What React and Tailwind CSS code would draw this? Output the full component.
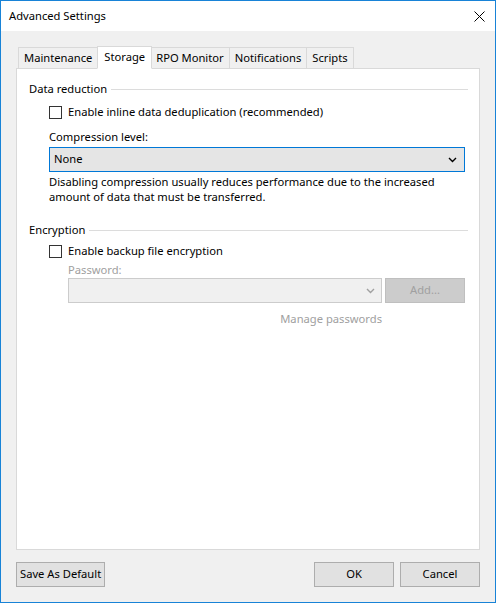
import React, { useState } from 'react';

const tabs = ['Maintenance', 'Storage', 'RPO Monitor', 'Notifications', 'Scripts'];

const Checkbox = ({ label, checked, onChange }) => (
  <label className="flex items-center gap-[6px] h-[15px] cursor-default">
    <span className="w-[13px] h-[13px] border border-[#333333] bg-white flex items-center justify-center">
      {checked && (
        <svg width="9" height="9" viewBox="0 0 9 9">
          <path d="M1 4.5 L3.5 7 L8 1.5" fill="none" stroke="#333" strokeWidth="1.4" />
        </svg>
      )}
    </span>
    <input type="checkbox" className="hidden" checked={checked} onChange={onChange} />
    <span>{label}</span>
  </label>
);

const GroupHeader = ({ title }) => (
  <div className="flex items-center gap-[4px] h-[16px]">
    <span>{title}</span>
    <div className="flex-1 h-px bg-[#dcdcdc]" />
  </div>
);

const Chevron = ({ color }) => (
  <svg width="9" height="6" viewBox="0 0 9 6">
    <path d="M1 1 L4.5 4.5 L8 1" fill="none" stroke={color} strokeWidth="1.4" />
  </svg>
);

const Button = ({ children, className = '' }) => (
  <button className={`h-[25px] bg-[#e1e1e1] border border-[#adadad] text-[#000] ${className}`}>
    {children}
  </button>
);

export default function App() {
  const [active, setActive] = useState('Storage');
  const [dedup, setDedup] = useState(false);
  const [encrypt, setEncrypt] = useState(false);

  return (
    <div
      className="w-[496px] h-[603px] border border-[#1883d7] bg-[#f0f0f0] flex flex-col text-[11.2px] text-black"
      style={{ fontFamily: '"Segoe UI", "Noto Sans", sans-serif' }}
    >
      {/* title bar */}
      <div className="h-[30px] bg-white flex items-center justify-between pl-[8px] pr-[10px] shrink-0">
        <span>Advanced Settings</span>
        <svg width="11" height="11" viewBox="0 0 11 11">
          <path d="M0.5 0.5 L10.5 10.5 M10.5 0.5 L0.5 10.5" stroke="#000" strokeWidth="1" />
        </svg>
      </div>

      <div className="flex-1 flex flex-col px-[15px] pt-[15px] pb-[15px]">
        {/* tab strip */}
        <div className="flex items-end h-[22px] pl-[2px] relative z-10">
          {tabs.map((t) => {
            const on = t === active;
            return (
              <button
                key={t}
                onClick={() => setActive(t)}
                className={
                  on
                    ? 'h-[23px] -mb-px bg-white border border-[#d9d9d9] border-b-white px-[6px] -mx-px relative z-10'
                    : 'h-[21px] bg-[#f0f0f0] border border-[#d9d9d9] border-b-0 px-[5px] -ml-px first:ml-0'
                }
              >
                {t}
              </button>
            );
          })}
        </div>

        {/* tab page */}
        <div className="flex-1 bg-white border border-[#d9d9d9] pl-[12px] pr-[11px] pt-[12px]">
          <GroupHeader title="Data reduction" />
          <div className="pl-[20px] pr-[3px] pt-[8px]">
            <Checkbox
              label="Enable inline data deduplication (recommended)"
              checked={dedup}
              onChange={() => setDedup(!dedup)}
            />
            <div className="mt-[9px] h-[16px] leading-[16px]">Compression level:</div>
            <div className="mt-[2px] h-[25px] border border-[#0078d7] bg-[#e5e5e5] flex items-center justify-between pl-[4px] pr-[7px]">
              <span>None</span>
              <Chevron color="#000" />
            </div>
            <p className="mt-[2px] leading-[15px]">
              Disabling compression usually reduces performance due to the increased amount of data that must be transferred.
            </p>
          </div>

          <div className="mt-[18px]">
            <GroupHeader title="Encryption" />
          </div>
          <div className="pl-[20px] pr-[3px] pt-[6px]">
            <Checkbox
              label="Enable backup file encryption"
              checked={encrypt}
              onChange={() => setEncrypt(!encrypt)}
            />
            <div className="pl-[19px]">
              <div className="mt-[3px] h-[16px] leading-[16px] text-[#a0a0a0]">Password:</div>
              <div className="mt-0 flex gap-[3px]">
                <div className="flex-1 h-[25px] border border-[#cccccc] bg-[#f0f0f0] flex items-center justify-end">
                  <div className="w-[22px] h-full flex items-center justify-center">
                    <Chevron color="#a0a0a0" />
                  </div>
                </div>
                <button className="w-[80px] h-[25px] bg-[#cccccc] border border-[#bfbfbf] text-[#a0a0a0]">Add...</button>
              </div>
              <div className="flex pr-[83px] justify-end mt-[8px]">
                <span className="text-[#a0a0a0]">Manage passwords</span>
              </div>
            </div>
          </div>
        </div>

        {/* dialog buttons */}
        <div className="flex items-center mt-[12px]">
          <Button className="px-[3px]">Save As Default</Button>
          <div className="flex-1" />
          <Button className="w-[80px]">OK</Button>
          <Button className="w-[80px] ml-[6px]">Cancel</Button>
        </div>
      </div>
    </div>
  );
}
